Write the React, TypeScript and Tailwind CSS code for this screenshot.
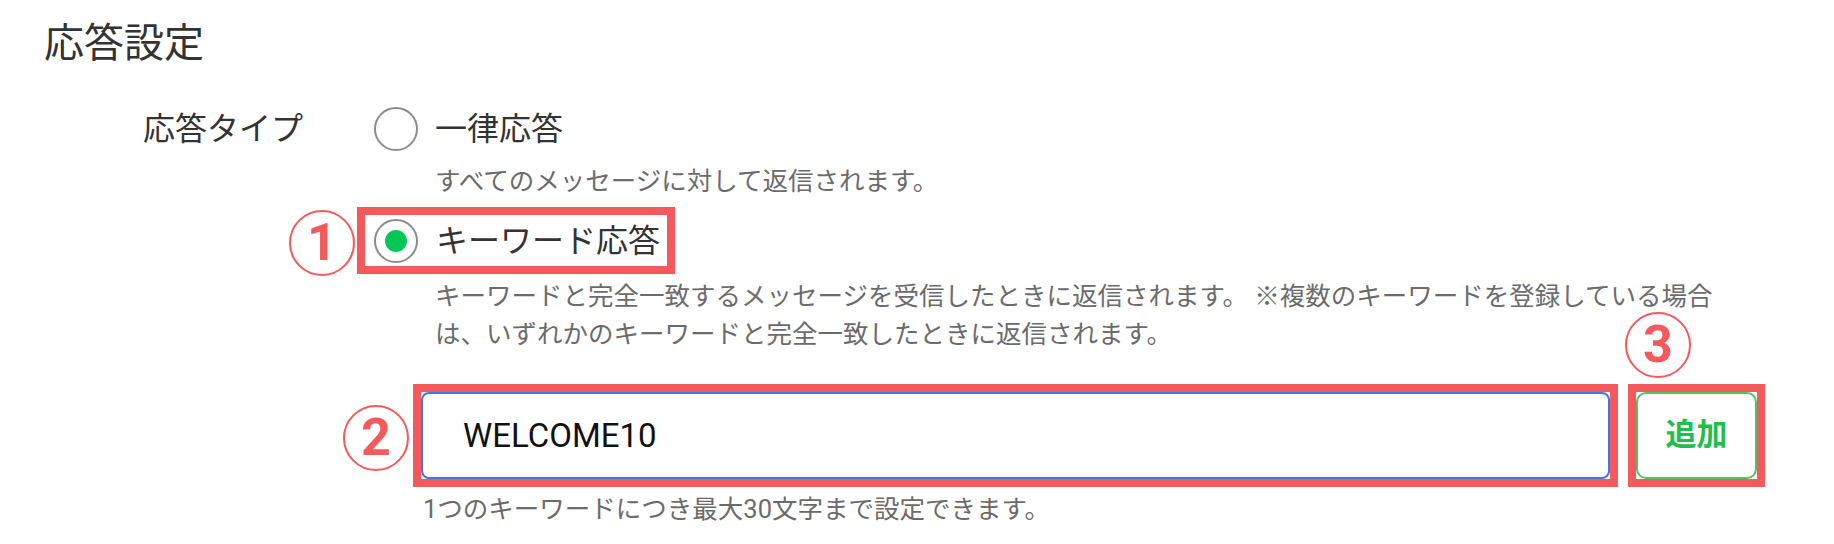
import React from "react";

const Radio = ({ checked }: { checked?: boolean }) => (
  <span className="flex h-[44px] w-[44px] shrink-0 items-center justify-center rounded-full border-2 border-[#8c8c8c] bg-white">
    {checked && <span className="h-[22px] w-[22px] rounded-full bg-[#06c755]" />}
  </span>
);

const Marker = ({ n, className }: { n: string; className: string }) => (
  <span
    className={
      "absolute flex h-[66px] w-[66px] items-center justify-center rounded-full border-2 border-[#f4595c] bg-white font-['Roboto',sans-serif] text-[52px] font-bold leading-none text-[#f4595c] " +
      className
    }
  >
    {n}
  </span>
);

export default function App() {
  return (
    <div className="relative h-[544px] w-[1834px] overflow-hidden bg-white font-['Roboto','Noto_Sans_CJK_JP',sans-serif]">
      <div className="pl-[44px] pt-[14px]">
        <h2 className="text-[40px] leading-[60px] text-[#333333]">応答設定</h2>

        <div className="mt-[33px] flex pl-[99px]">
          <div className="w-[231px] text-[32px] leading-[44px] text-[#333333]">応答タイプ</div>

          <div className="flex flex-col">
            <label className="flex h-[44px] items-center gap-[17px] text-[32px] text-[#333333]">
              <Radio />
              <span>一律応答</span>
            </label>
            <p className="ml-[61px] mt-[11px] text-[25.5px] leading-[38px] text-[#6b6b6b]">
              すべてのメッセージに対して返信されます。
            </p>

            <label className="-ml-[9px] mt-[15px] flex h-[51px] w-[302px] items-center gap-[18px] pl-[9px] text-[32px] text-[#333333] outline-8 outline-solid outline-[#f4595c]">
              <Radio checked />
              <span>キーワード応答</span>
            </label>
            <p className="ml-[61px] mt-[11px] text-[25.5px] leading-[38px] text-[#6b6b6b]">
              キーワードと完全一致するメッセージを受信したときに返信されます。 ※複数のキーワードを登録している場合
              <br />
              は、いずれかのキーワードと完全一致したときに返信されます。
            </p>

            <div className="ml-[47px] mt-[39px] flex gap-[26px]">
              <span className="flex outline-8 outline-solid outline-[#f4595c]">
                <input
                  readOnly
                  value="WELCOME10"
                  className="h-[87px] w-[1189px] rounded-[8px] border-2 border-[#3b7ae6] bg-white pl-[40px] text-[33px] text-[#111111] outline-none"
                />
              </span>
              <span className="flex outline-8 outline-solid outline-[#f4595c]">
                <button className="h-[87px] w-[121px] rounded-[10px] border-2 border-[#4cc566] bg-white text-[31px] font-bold text-[#1fbf4c]">
                  追加
                </button>
              </span>
            </div>
            <p className="ml-[49px] mt-[12px] text-[25.5px] leading-[36px] text-[#6b6b6b]">
              1つのキーワードにつき最大30文字まで設定できます。
            </p>
          </div>
        </div>
      </div>

      <Marker n="1" className="left-[289px] top-[210px]" />
      <Marker n="2" className="left-[343px] top-[405px]" />
      <Marker n="3" className="left-[1625px] top-[312px]" />
    </div>
  );
}
